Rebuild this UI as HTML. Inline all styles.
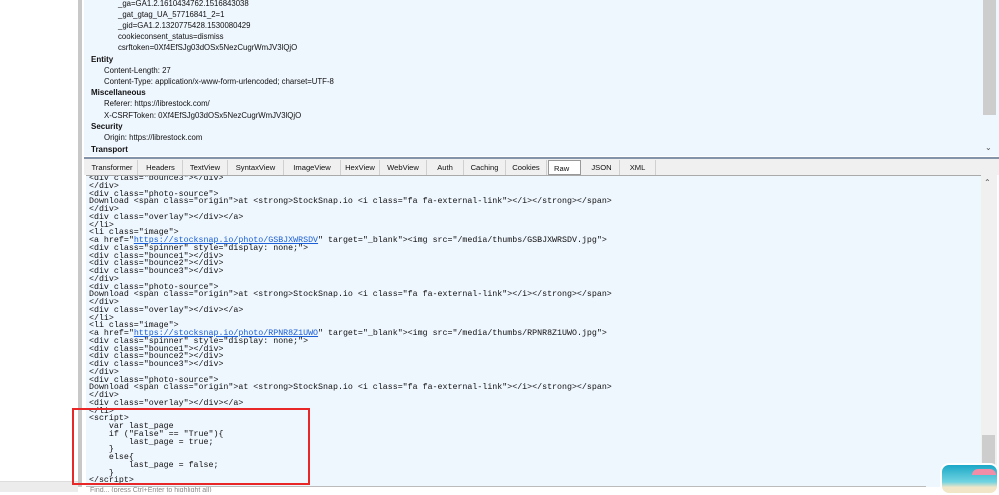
<!DOCTYPE html>
<html><head><style>
*{margin:0;padding:0;box-sizing:border-box}
body{width:999px;height:492px;overflow:hidden;background:#fff;position:relative;font-family:"Liberation Sans",sans-serif}
.abs{position:absolute}
.top{left:84px;top:0;width:915px;height:156px;background:#eef6fe}
.top div{position:absolute;font-size:7.8px;color:#111;white-space:nowrap;line-height:10px}
.top b{font-size:8px}
.tabs{left:84px;top:157px;width:915px;height:18px;background:#f0f0f0;border-top:2px solid #8494a8}
.tab{position:absolute;top:1px;height:15px;font-size:7.6px;line-height:15px;text-align:center;border-right:1px solid #d0d0d0;color:#111}
.code{left:86px;top:175px;width:895px;height:312px;background:#eef6fe;overflow:hidden;border-top:1px solid #aaa}
pre{position:absolute;left:3px;top:-1px;font-family:"Liberation Mono",monospace;font-size:8.3px;line-height:7.75px;color:#111}
a{color:#1a5fd6;text-decoration:underline}
</style></head><body>
<div class="abs" style="left:78px;top:0;width:4px;height:487px;background:#c8c8c8"></div>
<div class="abs" style="left:0;top:481px;width:78px;height:11px;background:#ececec;border-top:1px solid #ddd"></div>
<div class="abs top">
<div style="left:34px;top:-1px">_ga=GA1.2.1610434762.1516843038</div>
<div style="left:34px;top:10px">_gat_gtag_UA_57716841_2=1</div>
<div style="left:34px;top:21px">_gid=GA1.2.1320775428.1530080429</div>
<div style="left:34px;top:32px">cookieconsent_status=dismiss</div>
<div style="left:34px;top:43px">csrftoken=0Xf4EfSJg03dOSx5NezCugrWmJV3lQjO</div>
<div style="left:7px;top:55px"><b>Entity</b></div>
<div style="left:20px;top:66px">Content-Length: 27</div>
<div style="left:20px;top:77px">Content-Type: application/x-www-form-urlencoded; charset=UTF-8</div>
<div style="left:7px;top:88px"><b>Miscellaneous</b></div>
<div style="left:20px;top:99px">Referer: https://librestock.com/</div>
<div style="left:20px;top:111px">X-CSRFToken: 0Xf4EfSJg03dOSx5NezCugrWmJV3lQjO</div>
<div style="left:7px;top:122px"><b>Security</b></div>
<div style="left:20px;top:133px">Origin: https://librestock.com</div>
<div style="left:7px;top:145px"><b>Transport</b></div>
<div style="left:899px;top:0;width:13px;height:115px;background:#cdcdcd"></div>
<div style="left:901px;top:143px;font-size:8px;color:#555">&#8964;</div>
</div>
<div class="abs tabs">
<div class="tab" style="left:3px;width:51px">Transformer</div>
<div class="tab" style="left:55px;width:44px">Headers</div>
<div class="tab" style="left:99px;width:45px">TextView</div>
<div class="tab" style="left:144px;width:56px">SyntaxView</div>
<div class="tab" style="left:200px;width:57px">ImageView</div>
<div class="tab" style="left:257px;width:39px">HexView</div>
<div class="tab" style="left:296px;width:47px">WebView</div>
<div class="tab" style="left:343px;width:37px">Auth</div>
<div class="tab" style="left:380px;width:42px">Caching</div>
<div class="tab" style="left:422px;width:41px">Cookies</div>
<div class="tab" style="left:464px;width:33px;background:#fff;border:1px solid #999;text-align:left;padding-left:5px">Raw</div>
<div class="tab" style="left:500px;width:36px">JSON</div>
<div class="tab" style="left:536px;width:36px">XML</div>
</div>
<div class="abs code">
<pre>&lt;div class="bounce3"&gt;&lt;/div&gt;
&lt;/div&gt;
&lt;div class="photo-source"&gt;
Download &lt;span class="origin"&gt;at &lt;strong&gt;StockSnap.io &lt;i class="fa fa-external-link"&gt;&lt;/i&gt;&lt;/strong&gt;&lt;/span&gt;
&lt;/div&gt;
&lt;div class="overlay"&gt;&lt;/div&gt;&lt;/a&gt;
&lt;/li&gt;
&lt;li class="image"&gt;
&lt;a href="<a>https://stocksnap.io/photo/GSBJXWRSDV</a>" target="_blank"&gt;&lt;img src="/media/thumbs/GSBJXWRSDV.jpg"&gt;
&lt;div class="spinner" style="display: none;"&gt;
&lt;div class="bounce1"&gt;&lt;/div&gt;
&lt;div class="bounce2"&gt;&lt;/div&gt;
&lt;div class="bounce3"&gt;&lt;/div&gt;
&lt;/div&gt;
&lt;div class="photo-source"&gt;
Download &lt;span class="origin"&gt;at &lt;strong&gt;StockSnap.io &lt;i class="fa fa-external-link"&gt;&lt;/i&gt;&lt;/strong&gt;&lt;/span&gt;
&lt;/div&gt;
&lt;div class="overlay"&gt;&lt;/div&gt;&lt;/a&gt;
&lt;/li&gt;
&lt;li class="image"&gt;
&lt;a href="<a>https://stocksnap.io/photo/RPNR8Z1UWO</a>" target="_blank"&gt;&lt;img src="/media/thumbs/RPNR8Z1UWO.jpg"&gt;
&lt;div class="spinner" style="display: none;"&gt;
&lt;div class="bounce1"&gt;&lt;/div&gt;
&lt;div class="bounce2"&gt;&lt;/div&gt;
&lt;div class="bounce3"&gt;&lt;/div&gt;
&lt;/div&gt;
&lt;div class="photo-source"&gt;
Download &lt;span class="origin"&gt;at &lt;strong&gt;StockSnap.io &lt;i class="fa fa-external-link"&gt;&lt;/i&gt;&lt;/strong&gt;&lt;/span&gt;
&lt;/div&gt;
&lt;div class="overlay"&gt;&lt;/div&gt;&lt;/a&gt;
&lt;/li&gt;
&lt;script&gt;
    var last_page
    if ("False" == "True"){
        last_page = true;
    }
    else{
        last_page = false;
    }
&lt;/script&gt;</pre>
</div>
<div class="abs" style="left:981px;top:175px;width:16px;height:312px;background:#f0f0f0"></div>
<div class="abs" style="left:984px;top:178px;font-size:8px;color:#555">&#8963;</div>
<div class="abs" style="left:982px;top:435px;width:13px;height:30px;background:#cdcdcd"></div>
<div class="abs" style="left:72px;top:408px;width:238px;height:77px;border:2px solid #e82828"></div>
<div class="abs" style="left:86px;top:486px;width:840px;height:6px;background:#fff;border-top:1px solid #bbb;font-size:7px;color:#888;padding-left:4px;line-height:8px;overflow:hidden">Find... (press Ctrl+Enter to highlight all)</div>
<div class="abs" style="left:940px;top:463px;width:59px;height:32px;border-radius:9px;border:2px solid #fff;background:linear-gradient(#1ba8c8,#6fd3e0 60%,#f2e6c8 80%);overflow:hidden"><div class="abs" style="left:30px;top:4px;width:24px;height:6px;background:#f28da8;border-radius:12px 12px 0 0"></div></div>
</body></html>
